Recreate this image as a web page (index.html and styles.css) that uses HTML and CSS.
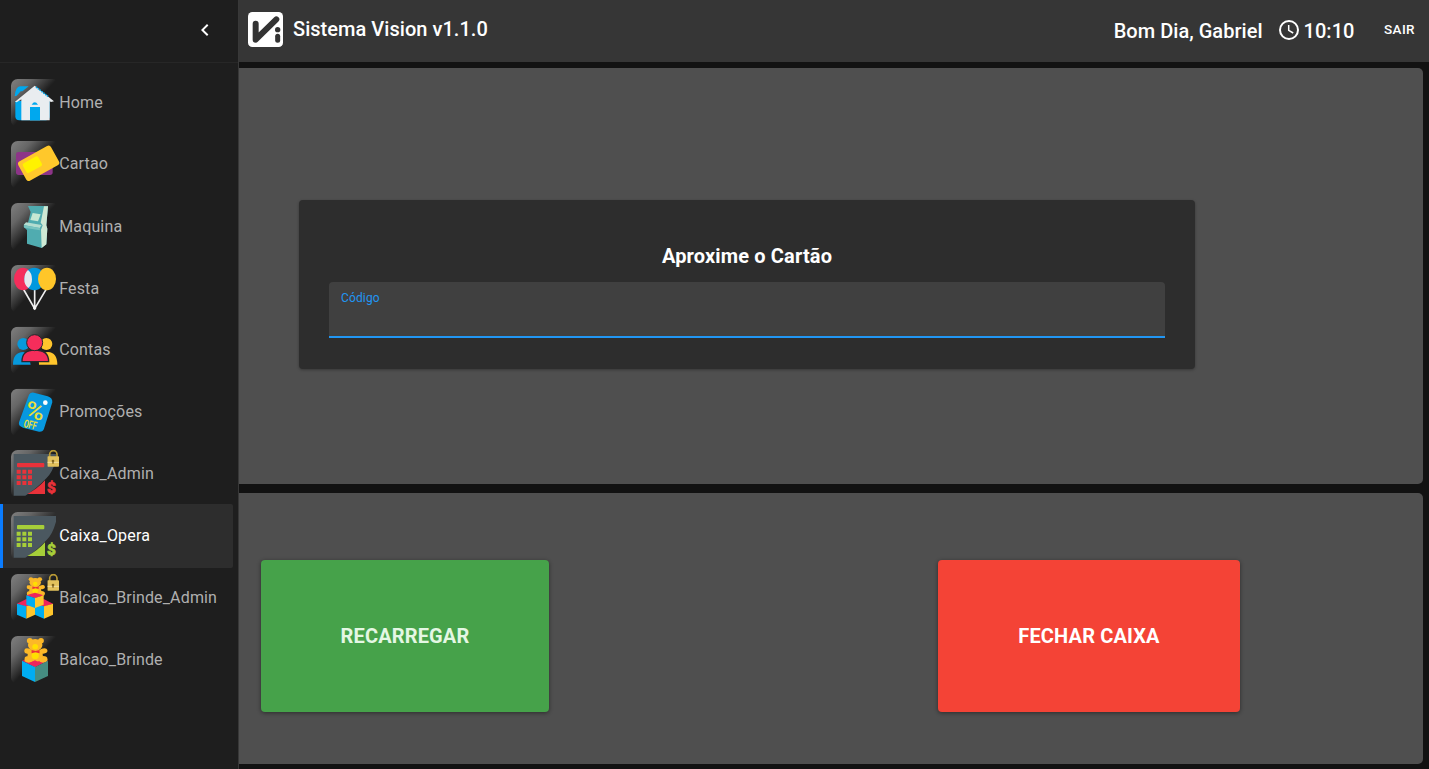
FILE: index.html
```html
<!DOCTYPE html>
<html lang="pt-BR">
<head>
<meta charset="utf-8">
<title>Sistema Vision</title>
<link rel="stylesheet" href="styles.css">
</head>
<body>
<svg class="defs" aria-hidden="true">
  <defs>
    <linearGradient id="shine" x1="0" y1="0" x2=".52" y2=".48">
      <stop offset="0" stop-color="#808080"/>
      <stop offset=".45" stop-color="#666"/>
      <stop offset="1" stop-color="#666" stop-opacity="0"/>
    </linearGradient>
    <symbol id="tile" viewBox="0 0 144 144"><rect width="144" height="144" rx="20" fill="url(#shine)"/></symbol>
    <symbol id="bear" viewBox="0 0 70 80" preserveAspectRatio="none">
      <g fill="#fcb827">
        <circle cx="15" cy="9" r="8"/><circle cx="46" cy="9" r="8"/>
        <ellipse cx="30" cy="22" rx="20" ry="18"/>
        <ellipse cx="30" cy="53" rx="21" ry="20"/>
        <ellipse cx="10" cy="40" rx="11" ry="8" transform="rotate(15 8 40)"/>
        <ellipse cx="53" cy="40" rx="11" ry="8" transform="rotate(-15 53 40)"/>
        <ellipse cx="12" cy="65" rx="12" ry="10"/><ellipse cx="52" cy="65" rx="12" ry="10"/>
      </g>
      <circle cx="30" cy="27" r="8" fill="#ffdf00"/><circle cx="30" cy="54" r="10" fill="#ffdf00"/>
      <path d="M20 37l11 3 11-3v10l-11-3-11 3z" fill="#ed3237"/>
    </symbol>
    <symbol id="lock" viewBox="0 0 36 54">
      <path d="M7 22V14a11 11 0 0 1 22 0v8" fill="none" stroke="#b99a35" stroke-width="5"/>
      <rect y="20" width="35" height="31" rx="2" fill="#e3c25c"/>
      <path d="M0 38h35" stroke="#f0dda0" stroke-width="3"/>
      <circle cx="17" cy="34" r="4" fill="#806520"/><path d="M15 34h4v8h-4z" fill="#806520"/>
    </symbol>
    <symbol id="register" viewBox="0 0 144 144">
      <path d="M8 12H135V29Q125 66 106 85Q75 118 43 137H8z" fill="#4b5860"/>
      <g fill="currentColor">
        <rect x="18" y="39" width="82" height="13" rx="3"/>
        <path d="M17 59h12v12H17zM34 59h12v12H34zM51 59h12v12H51zM17 76h12v12H17zM34 76h12v12H34zM51 76h12v12H51zM17 93h12v12H17zM34 93h12v12H34zM51 93h12v12H51z"/>
        <path d="M49 132Q80 116 102 91V132z"/>
        <text x="108" y="128" class="dollar">$</text>
      </g>
    </symbol>
  </defs>
</svg>
<div class="app">
  <aside class="sidebar">
    <div class="collapse"><svg width="24" height="24" viewBox="0 0 24 24"><path d="M15.4 7.4 14 6l-6 6 6 6 1.4-1.4L10.8 12z" fill="#fff"/></svg></div>
    <nav class="menu">
      <a class="item"><svg class="icon" viewBox="33 27 144 144"><use href="#tile" x="33" y="27" width="144" height="144"/>
        <path d="M44 79Q47 49 60 49H86L67 64H62L50 77z" fill="#00a8ee"/>
        <path d="M46 93H149V138Q149 151 137 151H58Q46 151 46 139z" fill="#00a8ee"/>
        <path d="M45 95 104 47 162 94 153 96 149 94V151H64V88L50 97z" fill="#e9edf0"/>
        <path d="M108 51l37 29" stroke="#00a8ee" stroke-width="5" stroke-dasharray="4 3"/>
        <path d="M95 104Q104 90 114 104z" fill="#00a8ee"/><path d="M90 111H120V151H90z" fill="#00a8ee"/></svg><span>Home</span></a>
      <a class="item raised"><svg class="icon" viewBox="33 213 144 144"><use href="#tile" x="33" y="213" width="144" height="144"/>
        <rect x="48" y="246" width="110" height="69" rx="8" fill="#8d3488"/>
        <g transform="rotate(-29 116 280)"><rect x="60" y="247" width="112" height="66" rx="9" fill="#ffc82b"/><rect x="71" y="258" width="53" height="33" rx="6" fill="#fff200"/></g></svg><span>Cartao</span></a>
      <a class="item"><svg class="icon" viewBox="33 24 144 144"><use href="#tile" x="33" y="24" width="144" height="144"/>
        <path d="M84 33H144L139 91 142 101 139 148 125 159 81 146V105L71 96 73 87 84 83 92 51z" fill="#50acb0"/>
        <path d="M132 34H144L139 91 142 101 139 148 125 159 123 104 128 91 122 83z" fill="#cfe9d4"/>
        <path d="M98 54 122 58 114 79 91 75z" fill="#c7e8d3"/>
        <path d="M78 82 125 90 119 99 71 90z" fill="#b4ddd0"/>
        <path d="M71 91 119 99 120 106 73 98z" fill="#79c4c0"/></svg><span>Maquina</span></a>
      <a class="item"><svg class="icon" viewBox="33 210 144 144"><use href="#tile" x="33" y="210" width="144" height="144"/>
        <path d="M70 282 104 341 138 284M104 281V340" fill="none" stroke="#eee" stroke-width="5"/><circle cx="104" cy="339" r="5" fill="#f4f4f4"/>
        <ellipse cx="69" cy="252" rx="27" ry="34" fill="#f52d5b"/><ellipse cx="103" cy="252" rx="30" ry="34" fill="#0098df"/>
        <path d="M84 225Q96 234 96 253Q96 270 85 279Q72 269 73 252Q73 235 84 225z" fill="#e4e8ec"/><ellipse cx="141" cy="252" rx="27" ry="34" fill="#ffc629"/></svg><span>Festa</span></a>
      <a class="item"><svg class="icon" viewBox="33 25 144 144"><use href="#tile" x="33" y="27" width="144" height="144"/>
        <circle cx="70" cy="79" r="18" fill="#0799dc"/><path d="M39 141Q38 105 70 103Q88 104 92 141z" fill="#0799dc"/>
        <circle cx="139" cy="79" r="18" fill="#ffc52c"/><path d="M117 141Q114 105 144 103Q172 105 172 141z" fill="#ffc52c"/>
        <path d="M66 132Q65 97 104 97Q146 97 146 132z" fill="#f52d5b" stroke="#29272b" stroke-width="4"/><circle cx="104" cy="75" r="24" fill="#f52d5b" stroke="#29272b" stroke-width="3"/></svg><span>Contas</span></a>
      <a class="item"><svg class="icon" viewBox="33 211 144 144"><use href="#tile" x="33" y="213" width="144" height="144"/>
        <path d="M87 231Q92 223 102 225L143 236Q158 241 157 254L132 333Q129 343 117 342L69 330Q54 325 57 314z" fill="#0798df"/>
        <circle cx="136" cy="255" r="7" fill="#fff"/><text x="105" y="303" class="percent" transform="rotate(15 105 280)" textLength="58" lengthAdjust="spacingAndGlyphs">%</text><text x="91" y="333" class="off" transform="rotate(14 92 320)" textLength="39" lengthAdjust="spacingAndGlyphs">OFF</text></svg><span>Promoções</span></a>
      <a class="item"><svg class="icon red" viewBox="0 0 144 144"><use href="#tile"/><use href="#register"/><use href="#lock" x="109" y="-1" width="36" height="54"/></svg><span>Caixa_Admin</span></a>
      <a class="item active"><svg class="icon lime" viewBox="0 0 144 144"><use href="#tile"/><use href="#register"/></svg><span>Caixa_Opera</span></a>
      <a class="item"><svg class="icon" viewBox="33 27 144 144"><use href="#tile" x="33" y="27" width="144" height="144"/><use href="#bear" x="80" y="36" width="60" height="61"/>
        <path d="M51 116 79 102 105 116 79 125z" fill="#ee245c"/><path d="M51 116 79 124V161L51 149z" fill="#00adf1"/><path d="M79 124 105 116V149L79 161z" fill="#ffc62c"/>
        <path d="M105 116 131 102 159 116 132 125z" fill="#ee245c"/><path d="M105 116 132 124V161L105 149z" fill="#00adf1"/><path d="M132 124 159 116V149L132 161z" fill="#ffc62c"/>
        <path d="M79 91 105 83 131 91 105 100z" fill="#ee245c"/><path d="M79 91 105 99V129L79 119z" fill="#00adf1"/><path d="M105 99 131 91V119L105 129z" fill="#ffc62c"/><use href="#lock" x="142" y="26" width="36" height="54"/></svg><span>Balcao_Brinde_Admin</span></a>
      <a class="item"><svg class="icon" viewBox="33 213 144 144"><use href="#tile" x="33" y="213" width="144" height="144"/>
        <path d="M66 287 105 275 144 287 105 307z" fill="#ee245c"/><use href="#bear" x="73" y="218" width="76" height="80"/>
        <path d="M87 295 105 286 122 295 105 305z" fill="#ee245c"/><path d="M66 287 105 306V351L66 333z" fill="#00adf1"/><path d="M105 306 144 287V333L105 351z" fill="#458c80"/></svg><span>Balcao_Brinde</span></a>
    </nav>
  </aside>
  <div class="main">
    <header class="topbar">
      <svg class="logo" width="35" height="35" viewBox="0 0 105 105"><rect width="105" height="105" rx="13" fill="#fff"/><path d="M23 35V83L85 22" fill="none" stroke="#333" stroke-width="18" stroke-linecap="round" stroke-linejoin="round"/><circle cx="89" cy="53" r="8" fill="#333"/><path d="M89 73V85" stroke="#333" stroke-width="15" stroke-linecap="round"/></svg>
      <h1 class="brand">Sistema Vision v1.1.0</h1>
      <span class="greeting">Bom Dia, Gabriel</span>
      <svg class="clock" width="24" height="24" viewBox="0 0 24 24"><circle cx="12" cy="12" r="9" fill="none" stroke="#fff" stroke-width="2"/><path d="M11.7 7v5.3l4.5 2.7" fill="none" stroke="#fff" stroke-width="1.5"/></svg>
      <span class="time">10:10</span>
      <a class="logout">SAIR</a>
    </header>
    <main class="content">
      <section class="panel reader">
        <div class="card"><h2>Aproxime o Cartão</h2><label class="field">Código</label></div>
      </section>
      <section class="panel actions">
        <button class="btn recharge">RECARREGAR</button>
        <button class="btn close">FECHAR CAIXA</button>
      </section>
    </main>
  </div>
</div>
</body>
</html>
```
FILE: styles.css
```css
* { box-sizing: border-box; }
body { margin: 0; background: #121212; color: #fff; font-family: Roboto, sans-serif; overflow: hidden; }
.defs { position: absolute; width: 0; height: 0; }
.app { display: flex; height: 769px; }
.sidebar { width: 239px; flex: none; background: #1e1e1e; border-right: 1px solid #383838; }
.collapse { height: 63px; border-bottom: 1px solid #272727; display: flex; align-items: center; justify-content: flex-end; padding: 0 21px 2px 0; }
.menu { padding: 8px 5px 0 0; display: flex; flex-direction: column; }
.item { height: 64px; margin-bottom: -2.15px; padding-left: 11px; display: flex; align-items: center; color: #b0b0b0; font-size: 16px; letter-spacing: .15px; border-radius: 2px; white-space: nowrap; }
.item span { padding: 0 0 1px .2px; }
.item.raised span { padding-bottom: 3px; }
.item.active { background: #2d2d2d; color: #fff; padding-left: 8px; border-left: 3px solid #0a7cff; border-radius: 0 2px 2px 0; }
.icon { width: 48px; height: 48px; flex: none; overflow: visible; }
.red { color: #e8323a; }
.lime { color: #a6ce39; }
.dollar { font: 900 46px Roboto, sans-serif; stroke: currentColor; stroke-width: 2px; }
.percent { font: 500 68px Roboto, sans-serif; fill: #e5df3b; text-anchor: middle; }
.off { font: bold 34px Roboto, sans-serif; fill: #e5df3b; text-anchor: middle; letter-spacing: 0; }
.main { flex: 1; display: flex; flex-direction: column; min-width: 0; }
.topbar { height: 62px; flex: none; background: #363636; display: flex; align-items: center; padding: 0 14px 0 9px; font-size: 20px; font-weight: 500; }
.topbar > * { margin-bottom: 3px; }
.logo { flex: none; }
.brand { margin: 0 auto 4px 10px; font-size: 20px; font-weight: 500; letter-spacing: .04px; }
.greeting, .time { margin-bottom: 0; letter-spacing: .03px; }
.clock { margin: 0 3px 2px 14px; }
.logout { font-size: 13.5px; letter-spacing: .4px; margin: 0 0 4px 29.5px; }
.content { flex: 1; padding: 6px 6px 5px 0; display: flex; flex-direction: column; gap: 9px; }
.panel { background: #4f4f4f; border-radius: 0 5px 5px 0; }
.reader { height: 416px; padding: 132px 228px 0 60px; }
.card { height: 169px; background: #2d2d2d; border-radius: 4px; padding: 45px 30px 31px; box-shadow: 0 1px 3px rgba(0,0,0,.3); }
.card h2 { margin: 0 0 14px; text-align: center; font-size: 20px; line-height: 23px; font-weight: 700; letter-spacing: .15px; }
.field { display: block; height: 56px; background: #404040; border-bottom: 2px solid #2196f3; border-radius: 4px 4px 0 0; padding: 9px 12px; font-size: 12px; line-height: 14px; letter-spacing: .15px; color: #2196f3; }
.actions { height: 271px; padding: 67px 183px 0 22px; display: flex; justify-content: space-between; }
.btn { height: 152px; border: 0; border-radius: 4px; color: #fff; font: 700 20px Roboto, sans-serif; letter-spacing: .15px; box-shadow: 0 1px 4px rgba(0,0,0,.45); }
.recharge { width: 288px; background: #46a24a; color: #e4f7e4; }
.close { width: 302px; background: #f44336; }
```
